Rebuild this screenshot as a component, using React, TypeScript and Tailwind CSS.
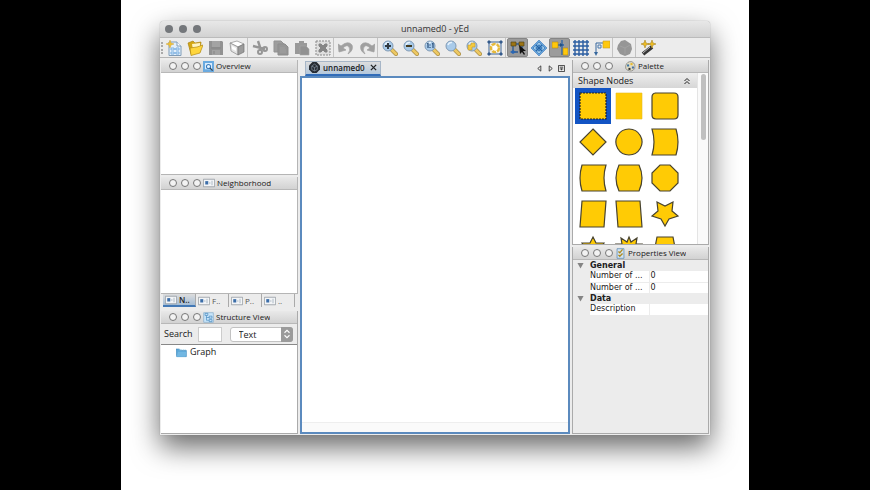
import type { ReactNode } from 'react'

const shapes = [
  'M2 2H28V28H2Z',
  '',
  'M5 2H24Q28 2 28 6V24Q28 28 24 28H6Q2 28 2 24V6Q2 2 6 2Z',
  'M15 2L28 15L15 28L2 15Z',
  'M15 2A13 13 0 1 1 14.9 2Z',
  'M2 2H26Q30 15 26 28H2Q6 15 2 2Z',
  'M4 2H28Q24 15 28 28H4Q0 15 4 2Z',
  'M5 2H25Q31 15 25 28H5Q-1 15 5 2Z',
  'M10 2H20L28 10V20L20 28H10L2 20V10Z',
  'M4 2H28L26 28H2Z',
  'M2 2H26L28 28H4Z',
  'M7 3L15 7L23 3L22 12L28 17L19 20L15 27L11 20L2 17L8 12Z',
  'M15 2L18 8H26L22 15L26 22H18L15 28L12 22H4L8 15L4 8H12Z',
  'M15 2L17 7L23 3L22 9L28 9L24 15L28 21H22L23 27L15 24L7 27L8 21H2L6 15L2 9H8L7 3L13 7Z',
  'M7 2H23L28 28H2Z',
]

function Icon({ children, className = 'size-4' }: { children: ReactNode; className?: string }) {
  return (
    <svg viewBox="0 0 16 16" className={`${className} shrink-0`} fill="none" aria-hidden="true">
      {children}
    </svg>
  )
}

function Lens({ children }: { children?: ReactNode }) {
  return (
    <Icon>
      <path d="M9 9L14 14" stroke="#a58a45" strokeWidth="4" strokeLinecap="round" />
      <path d="M9 9L14 14" stroke="#edc862" strokeWidth="2.8" strokeLinecap="round" />
      <circle cx="6" cy="6" r="5" fill="#a9cbea" stroke="#809ab5" />
      <path d="M3 5Q4 2 7 2.5" stroke="#e7f3fd" strokeWidth="1.4" />
      {children}
    </Icon>
  )
}

function PanelIcon() {
  return (
    <Icon className="h-3 w-3">
      <path d="M.5 3H15.5V13H.5Z" fill="#f3f5f7" stroke="#8d949b" />
      <path d="M3 5.5H7V10H3Z" fill="#3b6da8" />
      <path d="M8 8H10M12 5V11" stroke="#9aa7b5" />
    </Icon>
  )
}

const tools: { name: string; icon: ReactNode; active?: boolean; split?: boolean }[] = [
  {
    name: 'New',
    icon: (
      <Icon>
        <path d="M3 2H11L15 6V15.5H3Z" fill="#e3effa" stroke="#7f9cb8" />
        <path d="M11 2V6H15" fill="#fff" stroke="#7f9cb8" />
        <path d="M5 8H8V10H5ZM10 8H13V10H10ZM5 12H8V14H5ZM10 12H13V14H10ZM8 9H10M8 13H10" stroke="#79aee0" />
        <path d="M4 0L5 3L8 4L5 5L4 8L3 5L0 4L3 3Z" fill="#f2c230" stroke="#cfa53c" strokeWidth=".5" />
      </Icon>
    ),
  },
  {
    name: 'Open',
    icon: (
      <Icon>
        <path d="M1 3L6 1L8 3L14 2L13 12L4 14Z" fill="#d4a714" stroke="#a98212" strokeWidth=".7" />
        <path d="M5 4L13 3L13 8L6 10Z" fill="#fff4c3" />
        <path d="M3 8L10 7L16 5L13 13L4 15.5Z" fill="#ffd63d" stroke="#b38b14" strokeWidth=".7" />
      </Icon>
    ),
  },
  {
    name: 'Save',
    icon: (
      <Icon>
        <path d="M1 1H14L15 2V15H1Z" fill="#929292" />
        <path d="M4 1H12V7H4ZM4 10H12V15H4Z" fill="#a3a3a3" />
        <path d="M3 8H13M6 11V14" stroke="#858585" />
      </Icon>
    ),
  },
  {
    name: 'Export',
    icon: (
      <Icon>
        <path d="M1 3L8 1L15 4L9 7Z" fill="#fff" stroke="#8b8b8b" strokeWidth=".7" />
        <path d="M1 3L9 7V15L2 11Z" fill="#e4e4e4" stroke="#888" strokeWidth=".7" />
        <path d="M9 7L15 4V12L9 15Z" fill="#9c9c9c" stroke="#737373" strokeWidth=".7" />
        <path d="M3 6L7 8V11L3 9Z" fill="#fff" />
      </Icon>
    ),
  },
  {
    name: 'Cut',
    split: true,
    icon: (
      <Icon>
        <path d="M6 1L9 10M1 6L13 9" stroke="#969696" strokeWidth="2.4" />
        <circle cx="8" cy="12" r="2" stroke="#969696" strokeWidth="2" />
        <circle cx="13" cy="9" r="2" stroke="#969696" strokeWidth="2" />
      </Icon>
    ),
  },
  {
    name: 'Copy',
    icon: (
      <Icon>
        <path d="M1 1H8L11 4V12H1Z" fill="#9e9e9e" stroke="#939393" />
        <path d="M5 4H12L15 7V15H5Z" fill="#969696" stroke="#8d8d8d" />
        <path d="M7 8H12M7 10H13M7 12H13" stroke="#aaa" strokeWidth=".6" />
      </Icon>
    ),
  },
  {
    name: 'Paste',
    icon: (
      <Icon>
        <path d="M1 3H5V1H10V3H13V14H1Z" fill="#999" />
        <path d="M6 6H12L15 9V15H6Z" fill="#919191" stroke="#a9a9a9" strokeWidth=".6" />
      </Icon>
    ),
  },
  {
    name: 'Delete',
    icon: (
      <Icon>
        <path d="M1 1H15V15H1Z" fill="#dedede" stroke="#898989" strokeDasharray="2 1" />
        <path d="M4 4H6L8 6L10 4H12V6L10 8L12 10V12H10L8 10L6 12H4V10L6 8L4 6Z" fill="#858585" stroke="#858585" />
      </Icon>
    ),
  },
  {
    name: 'Undo',
    split: true,
    icon: (
      <Icon>
        <path d="M0 4L1 12L8 10L5 8Q9 4 11 7Q13 10 10 14Q16 10 14 5Q10 0 3 6Z" fill="#a0a0a0" stroke="#a0a0a0" strokeWidth=".7" />
      </Icon>
    ),
  },
  {
    name: 'Redo',
    icon: (
      <Icon>
        <path d="M16 4L15 12L8 10L11 8Q7 4 5 7Q3 10 6 14Q0 10 2 5Q6 0 13 6Z" fill="#a0a0a0" stroke="#a0a0a0" strokeWidth=".7" />
      </Icon>
    ),
  },
  { name: 'Zoom in', split: true, icon: <Lens><path d="M3 6H9M6 3V9" stroke="#323b43" strokeWidth="2" /></Lens> },
  { name: 'Zoom out', icon: <Lens><path d="M3 6H9" stroke="#453c20" strokeWidth="2" /></Lens> },
  {
    name: 'Zoom 1:1',
    icon: <Lens><path d="M3 4L4 3.5V8M8 4L9 3.5V8M6 4.5V5.5M6 7V8" stroke="#284e79" strokeWidth="1.2" /></Lens>,
  },
  { name: 'Zoom', icon: <Lens /> },
  {
    name: 'Zoom to selection',
    icon: <Lens><path d="M2 5H5V3H9V7H6V10H2Z" fill="#f4ca40" stroke="#c59c2b" strokeWidth=".6" /></Lens>,
  },
  {
    name: 'Fit content',
    icon: (
      <Icon>
        <path d="M2 2H14V14H2Z" stroke="#3e6799" />
        <path d="M1 1H3V3H1ZM13 1H15V3H13ZM1 13H3V15H1ZM13 13H15V15H13Z" fill="#345b8b" stroke="#345b8b" />
        <circle cx="8" cy="8" r="4" fill="#fff" stroke="#e6b93a" strokeWidth="2.5" strokeDasharray="4 1" />
      </Icon>
    ),
  },
  {
    name: 'Edit mode',
    split: true,
    active: true,
    icon: (
      <Icon>
        <path d="M3 5V12H8M6 4H11M12 6V12" stroke="#315b91" strokeWidth="1.4" />
        <path d="M1 2H6V6H1ZM9 2H14V6H9Z" fill="#9d7413" stroke="#52451b" strokeWidth=".7" />
        <path d="M3 10L6 12L3 14L0 12Z" fill="#2b67b4" />
        <path d="M9 5L10 14L12 12L14 15L15 14L13 11H16Z" fill="#111" />
      </Icon>
    ),
  },
  {
    name: 'Navigation mode',
    icon: (
      <Icon>
        <path d="M8 0L16 8L8 16L0 8Z" fill="#67a5dd" stroke="#3c77b5" strokeWidth=".6" />
        <path d="M8 2V14M2 8H14M5 5L11 11M11 5L5 11" stroke="#2663a3" />
        <path d="M8 2L11 5H5ZM8 14L5 11H11ZM2 8L5 5V11ZM14 8L11 5V11Z" fill="#a0cbec" stroke="#2e6dad" strokeWidth=".5" />
      </Icon>
    ),
  },
  {
    name: 'Snap lines',
    active: true,
    icon: (
      <Icon>
        <path d="M10 0V15M6 5H12" stroke="#2b65a9" strokeWidth="1.3" />
        <path d="M0 2H6V8H0ZM11 8H16V15H11Z" fill="#ffc80d" stroke="#b38c14" strokeWidth=".6" />
        <path d="M8 3L11 5L8 7Z" fill="#244f82" />
      </Icon>
    ),
  },
  {
    name: 'Grid',
    icon: (
      <Icon>
        <path d="M2 0V16M6 0V16M10 0V16M14 0V16M0 2H16M0 6H16M0 10H16M0 14H16" stroke="#2b5da1" strokeWidth="1.4" />
      </Icon>
    ),
  },
  {
    name: 'Orthogonal edges',
    icon: (
      <Icon>
        <path d="M9 3H2V13" stroke="#36679d" />
        <path d="M9 1H16V8H9Z" fill="#ffc80d" stroke="#c8a022" strokeWidth=".6" />
        <path d="M4 5H7V8H4Z" stroke="#4979ad" />
        <path d="M0 12H4L2 16Z" fill="#36679d" />
      </Icon>
    ),
  },
  {
    name: 'Group',
    split: true,
    icon: (
      <Icon>
        <path d="M4 1L8 0L11 2L14 4L15 9L13 14L8 16L3 14L0 9L1 5Z" fill="#969696" />
        <path d="M3 6L8 8L13 5M8 8V14" stroke="#a6a6a6" strokeWidth=".7" />
      </Icon>
    ),
  },
  {
    name: 'Layout',
    split: true,
    icon: (
      <Icon>
        <path d="M3 14L12 7" stroke="#373737" strokeWidth="4" />
        <path d="M3 13L10 7" stroke="#bbb" />
        <path d="M5 0L6 3L9 4L6 5L5 8L4 5L1 4L4 3ZM12 0L13 3L16 4L13 5L12 8L11 5L8 4L11 3Z" fill="#eebc20" stroke="#aa8623" strokeWidth=".6" />
      </Icon>
    ),
  },
]

function PaneHeader({ title, icon, wide }: { title: string; icon: ReactNode; wide?: boolean }) {
  return (
    <header className="flex h-[13px] shrink-0 items-center border-b border-[#b8b8b8] bg-linear-to-b from-[#e9e9e9] to-[#d2d2d2] pl-2">
      <div className="flex gap-1">
        {['Close', 'Float', 'Dock'].map((label) => (
          <button
            key={label}
            aria-label={label}
            className="size-2 rounded-full border border-[#777] bg-[#f2f2f2]"
          />
        ))}
      </div>
      <span className={wide ? 'ml-3' : 'ml-[2px]'}>{icon}</span>
      <h2 className="ml-[2px] truncate text-[8px] leading-3 font-medium">{title}</h2>
    </header>
  )
}

function ShapePalette() {
  return (
    <div className="grid grid-cols-[36px_36px_36px] auto-rows-[36px] pl-[2px]">
      {shapes.map((d, i) => (
        <button
          key={i}
          aria-label={`Shape ${i + 1}`}
          className={`flex items-center justify-center ${i === 0 ? 'bg-[#1254c4]' : ''}`}
        >
          <svg viewBox="0 0 30 30" className="size-[30px]" fill="#ffcb05" stroke="#48432f" strokeWidth="1.2">
            {i === 1 ? (
              <path d="M2 2H28V28H2Z" stroke="#e5bc27" strokeWidth=".6" />
            ) : (
              <path d={d} stroke={i === 0 ? '#222' : undefined} strokeDasharray={i === 0 ? '2 1' : undefined} />
            )}
          </svg>
        </button>
      ))}
    </div>
  )
}

function Property({ name, value }: { name: string; value: string }) {
  return (
    <tr className="h-[11px] border-b border-[#ececec] bg-white">
      <td className="bg-[#ececec]" />
      <td className="border-r border-[#ececec] whitespace-nowrap">{name}</td>
      <td className="pl-px">{value}</td>
    </tr>
  )
}

function PropertyGroup({ name }: { name: string }) {
  return (
    <tr className="h-[11px]">
      <td className="pl-1">
        <Icon className="size-[7px]">
          <path d="M1 2H15L8 15Z" fill="#848484" />
        </Icon>
      </td>
      <th colSpan={2} className="text-left font-bold">
        {name}
      </th>
    </tr>
  )
}

export default function App() {
  return (
    <main className="min-h-screen bg-black px-[121px] font-['Open_Sans','Noto_Sans',sans-serif] text-[#202020]">
      <div className="flex min-h-screen flex-col overflow-hidden bg-white px-[39px] pt-[21px] pb-[55px]">
        <section className="flex flex-1 flex-col rounded-t-[4px] bg-[#ececec] shadow-[0_0_1px_#777,0_12px_28px_rgba(0,0,0,0.6)]">
          <header className="relative flex h-[17px] items-center justify-center rounded-t-[4px] border-b border-[#bbb] bg-linear-to-b from-[#e8e8e8] to-[#d2d2d2]">
            <div className="absolute left-[5px] flex gap-[6px]">
              <button aria-label="Close" className="size-2 rounded-full bg-[#74777b]" />
              <button aria-label="Minimize" className="size-2 rounded-full bg-[#74777b]" />
              <button aria-label="Zoom window" className="size-2 rounded-full bg-[#74777b]" />
            </div>
            <h1 className="text-[9px] leading-4 text-[#333]">unnamed0 - yEd</h1>
          </header>

          <nav className="flex h-5 items-center border-b border-[#b5b5b5] pl-px">
            <span className="h-3 border-l-2 border-dotted border-[#aaa]" />
            {tools.map((tool) => (
              <div key={tool.name} className="flex items-center">
                {tool.split && <span className="mr-px h-[19px] w-px bg-[#c3c3c3]" />}
                <button
                  aria-label={tool.name}
                  className={`flex h-[19px] w-[21px] items-center justify-center ${
                    tool.active ? 'rounded-[2px] border border-[#858585] bg-[#9b9b9b]' : ''
                  }`}
                >
                  {tool.icon}
                </button>
              </div>
            ))}
          </nav>

          <div className="grid flex-1 grid-cols-[137px_1fr_137px] gap-[2px] px-px pt-[2px] pb-px">
            <aside className="flex flex-col">
              <section className="flex h-[115px] flex-col border-r border-b border-[#b5b5b5] bg-white">
                <PaneHeader
                  title="Overview"
                  icon={
                    <Icon className="size-[11px]">
                      <path d="M0 0H16V16H0Z" fill="#6aaae0" />
                      <path d="M3 3H13V12H3Z" fill="#e4f2ff" />
                      <circle cx="8" cy="8" r="3" stroke="#3b7dbd" strokeWidth="1.5" />
                      <path d="M10 10L14 14" stroke="#345" strokeWidth="2" />
                    </Icon>
                  }
                />
              </section>
              <section className="mt-[2px] flex h-[117px] flex-col border-r border-b border-[#b5b5b5] bg-white">
                <PaneHeader title="Neighborhood" icon={<PanelIcon />} />
              </section>
              <div className="flex h-[15px] items-start pl-[2px] text-[8px]">
                {['N..', 'F..', 'P..', '..'].map((label, i) => (
                  <button
                    key={label}
                    className={`flex h-[13px] w-[33px] items-center gap-[2px] border-r border-[#aaa] pl-[2px] ${
                      i === 0
                        ? 'border-b-2 border-b-[#4379b6] bg-linear-to-b from-[#ddd] to-[#a5bdd5] font-semibold'
                        : 'text-[#555]'
                    }`}
                  >
                    <PanelIcon />
                    {label}
                  </button>
                ))}
              </div>
              <section className="mt-[2px] flex flex-1 flex-col border-r border-b border-[#aaa]">
                <PaneHeader
                  title="Structure View"
                  icon={
                    <Icon className="size-[11px]">
                      <path d="M1 1H15V15H1Z" fill="#c8e5fa" stroke="#83abc9" />
                      <path d="M3 2H7V5H3ZM9 6H13V9H9ZM9 11H13V14H9ZM5 5V12H9M5 8H9" stroke="#4789bd" />
                    </Icon>
                  }
                />
                <div className="flex h-5 items-center pl-[3px] text-[9px]">
                  <label htmlFor="search">Search</label>
                  <input id="search" className="ml-[5px] h-[15px] w-6 border border-[#ccc] bg-white px-1 outline-none" />
                  <div className="relative ml-2 h-[15px] w-[63px]">
                    <select
                      aria-label="Search in"
                      className="h-full w-full appearance-none rounded-[3px] border border-[#c2c2c2] bg-white pl-2"
                    >
                      <option>Text</option>
                    </select>
                    <span className="pointer-events-none absolute inset-y-0 right-0 flex w-3 items-center justify-center rounded-r-[3px] bg-[#9b9b9b]">
                      <Icon className="size-[10px]">
                        <path d="M4 6L8 2L12 6M4 10L8 14L12 10" stroke="#fff" strokeWidth="1.7" />
                      </Icon>
                    </span>
                  </div>
                </div>
                <div className="flex-1 border-t border-[#888] bg-white">
                  <div className="flex h-[14px] items-center gap-[3px] pl-[15px] text-[9px]">
                    <Icon className="size-[11px]">
                      <path d="M0 3H5L7 5H15V14H1Z" fill="#5ba7d8" stroke="#438bbd" />
                      <path d="M3 7H15L14 14H1Z" fill="#72b7e2" />
                      <path d="M4 4H14" stroke="#9ad2ef" strokeDasharray="2 1" />
                    </Icon>
                    Graph
                  </div>
                </div>
              </section>
            </aside>

            <section className="flex min-w-0 flex-col">
              <div className="flex h-4 items-center pr-[5px] pl-[5px]">
                <button className="flex h-[15px] w-[76px] items-center border border-b-2 border-[#a7b6c7] border-b-[#316cb9] bg-linear-to-b from-[#ddd] to-[#b4c8dc] px-[3px] text-[8px] font-semibold">
                  <Icon className="size-[11px]">
                    <path d="M5 0H11L16 5V11L11 16H5L0 11V5Z" fill="#272c33" />
                    <path d="M8 3L12 6V11L8 13L4 11V6ZM4 6L8 8L12 6M8 8V13" stroke="#8390a1" />
                  </Icon>
                  <span className="mx-[3px]">unnamed0</span>
                  <Icon className="ml-auto size-[7px]">
                    <path d="M2 2L14 14M14 2L2 14" stroke="#222" strokeWidth="3" />
                  </Icon>
                </button>
                <div className="ml-auto flex gap-1">
                  <button aria-label="Previous tab">
                    <Icon className="size-[7px]"><path d="M11 2V14L4 8Z" stroke="#333" strokeWidth="2" /></Icon>
                  </button>
                  <button aria-label="Next tab">
                    <Icon className="size-[7px]"><path d="M5 2V14L12 8Z" stroke="#333" strokeWidth="2" /></Icon>
                  </button>
                  <button aria-label="Tab list">
                    <Icon className="size-[7px]">
                      <path d="M1 1H15V15H1ZM4 5H12M4 9H12M8 8V12" stroke="#333" strokeWidth="2" />
                    </Icon>
                  </button>
                </div>
              </div>
              <div className="flex flex-1 flex-col justify-end border-2 border-[#5b8abe] bg-white">
                <div className="h-[10px] border-t border-[#eee] bg-[#fafafa]" />
              </div>
            </section>

            <aside className="flex flex-col">
              <section className="flex h-[185px] flex-col overflow-hidden border-x border-b border-[#aaa] bg-white">
                <PaneHeader
                  wide
                  title="Palette"
                  icon={
                    <Icon className="size-[11px]">
                      <path d="M1 7Q3 0 10 1Q16 4 14 11Q10 17 3 13Q0 11 1 7Z" fill="#e1dcc4" stroke="#777" />
                      <path d="M3 5H6V8H3Z" fill="#3874a8" />
                      <path d="M8 3H11V6H8Z" fill="#e8ba2d" />
                      <path d="M10 8H13V11H10Z" fill="#426da4" />
                      <path d="M5 10H8V13H5Z" fill="#333" />
                    </Icon>
                  }
                />
                <div className="flex min-h-0 flex-1">
                  <div className="min-w-0 flex-1 overflow-hidden">
                    <button className="flex h-[15px] w-full items-center justify-between bg-linear-to-b from-[#eee] to-[#d6d6d6] pr-[6px] pl-[5px] text-[9px]">
                      Shape Nodes
                      <Icon className="size-2">
                        <path d="M3 8L8 3L13 8M3 14L8 9L13 14" stroke="#222" strokeWidth="2" />
                      </Icon>
                    </button>
                    <ShapePalette />
                  </div>
                  <div className="flex w-[11px] justify-center border-l border-[#e4e4e4] bg-[#fafafa] pt-px">
                    <div className="h-[66px] w-[5px] rounded-full bg-[#c0c0c0]" />
                  </div>
                </div>
              </section>
              <section className="mt-[2px] flex flex-1 flex-col border-x border-b border-[#aaa]">
                <PaneHeader
                  title="Properties View"
                  icon={
                    <Icon className="size-[11px]">
                      <path d="M3 1H13V15H3Z" fill="#d1e4f4" stroke="#5081ad" />
                      <path d="M5 5L7 7L11 2M5 10L7 12L11 8" stroke="#b08a20" strokeWidth="2" />
                    </Icon>
                  }
                />
                <table className="w-full table-fixed border-collapse font-['DejaVu_Sans',sans-serif] text-[8px] leading-[10px]">
                  <colgroup>
                    <col className="w-[17px]" />
                    <col className="w-[59px]" />
                    <col />
                  </colgroup>
                  <tbody>
                    <PropertyGroup name="General" />
                    <Property name="Number of ..." value="0" />
                    <Property name="Number of ..." value="0" />
                    <PropertyGroup name="Data" />
                    <Property name="Description" value="" />
                  </tbody>
                </table>
              </section>
            </aside>
          </div>
        </section>
      </div>
    </main>
  )
}
